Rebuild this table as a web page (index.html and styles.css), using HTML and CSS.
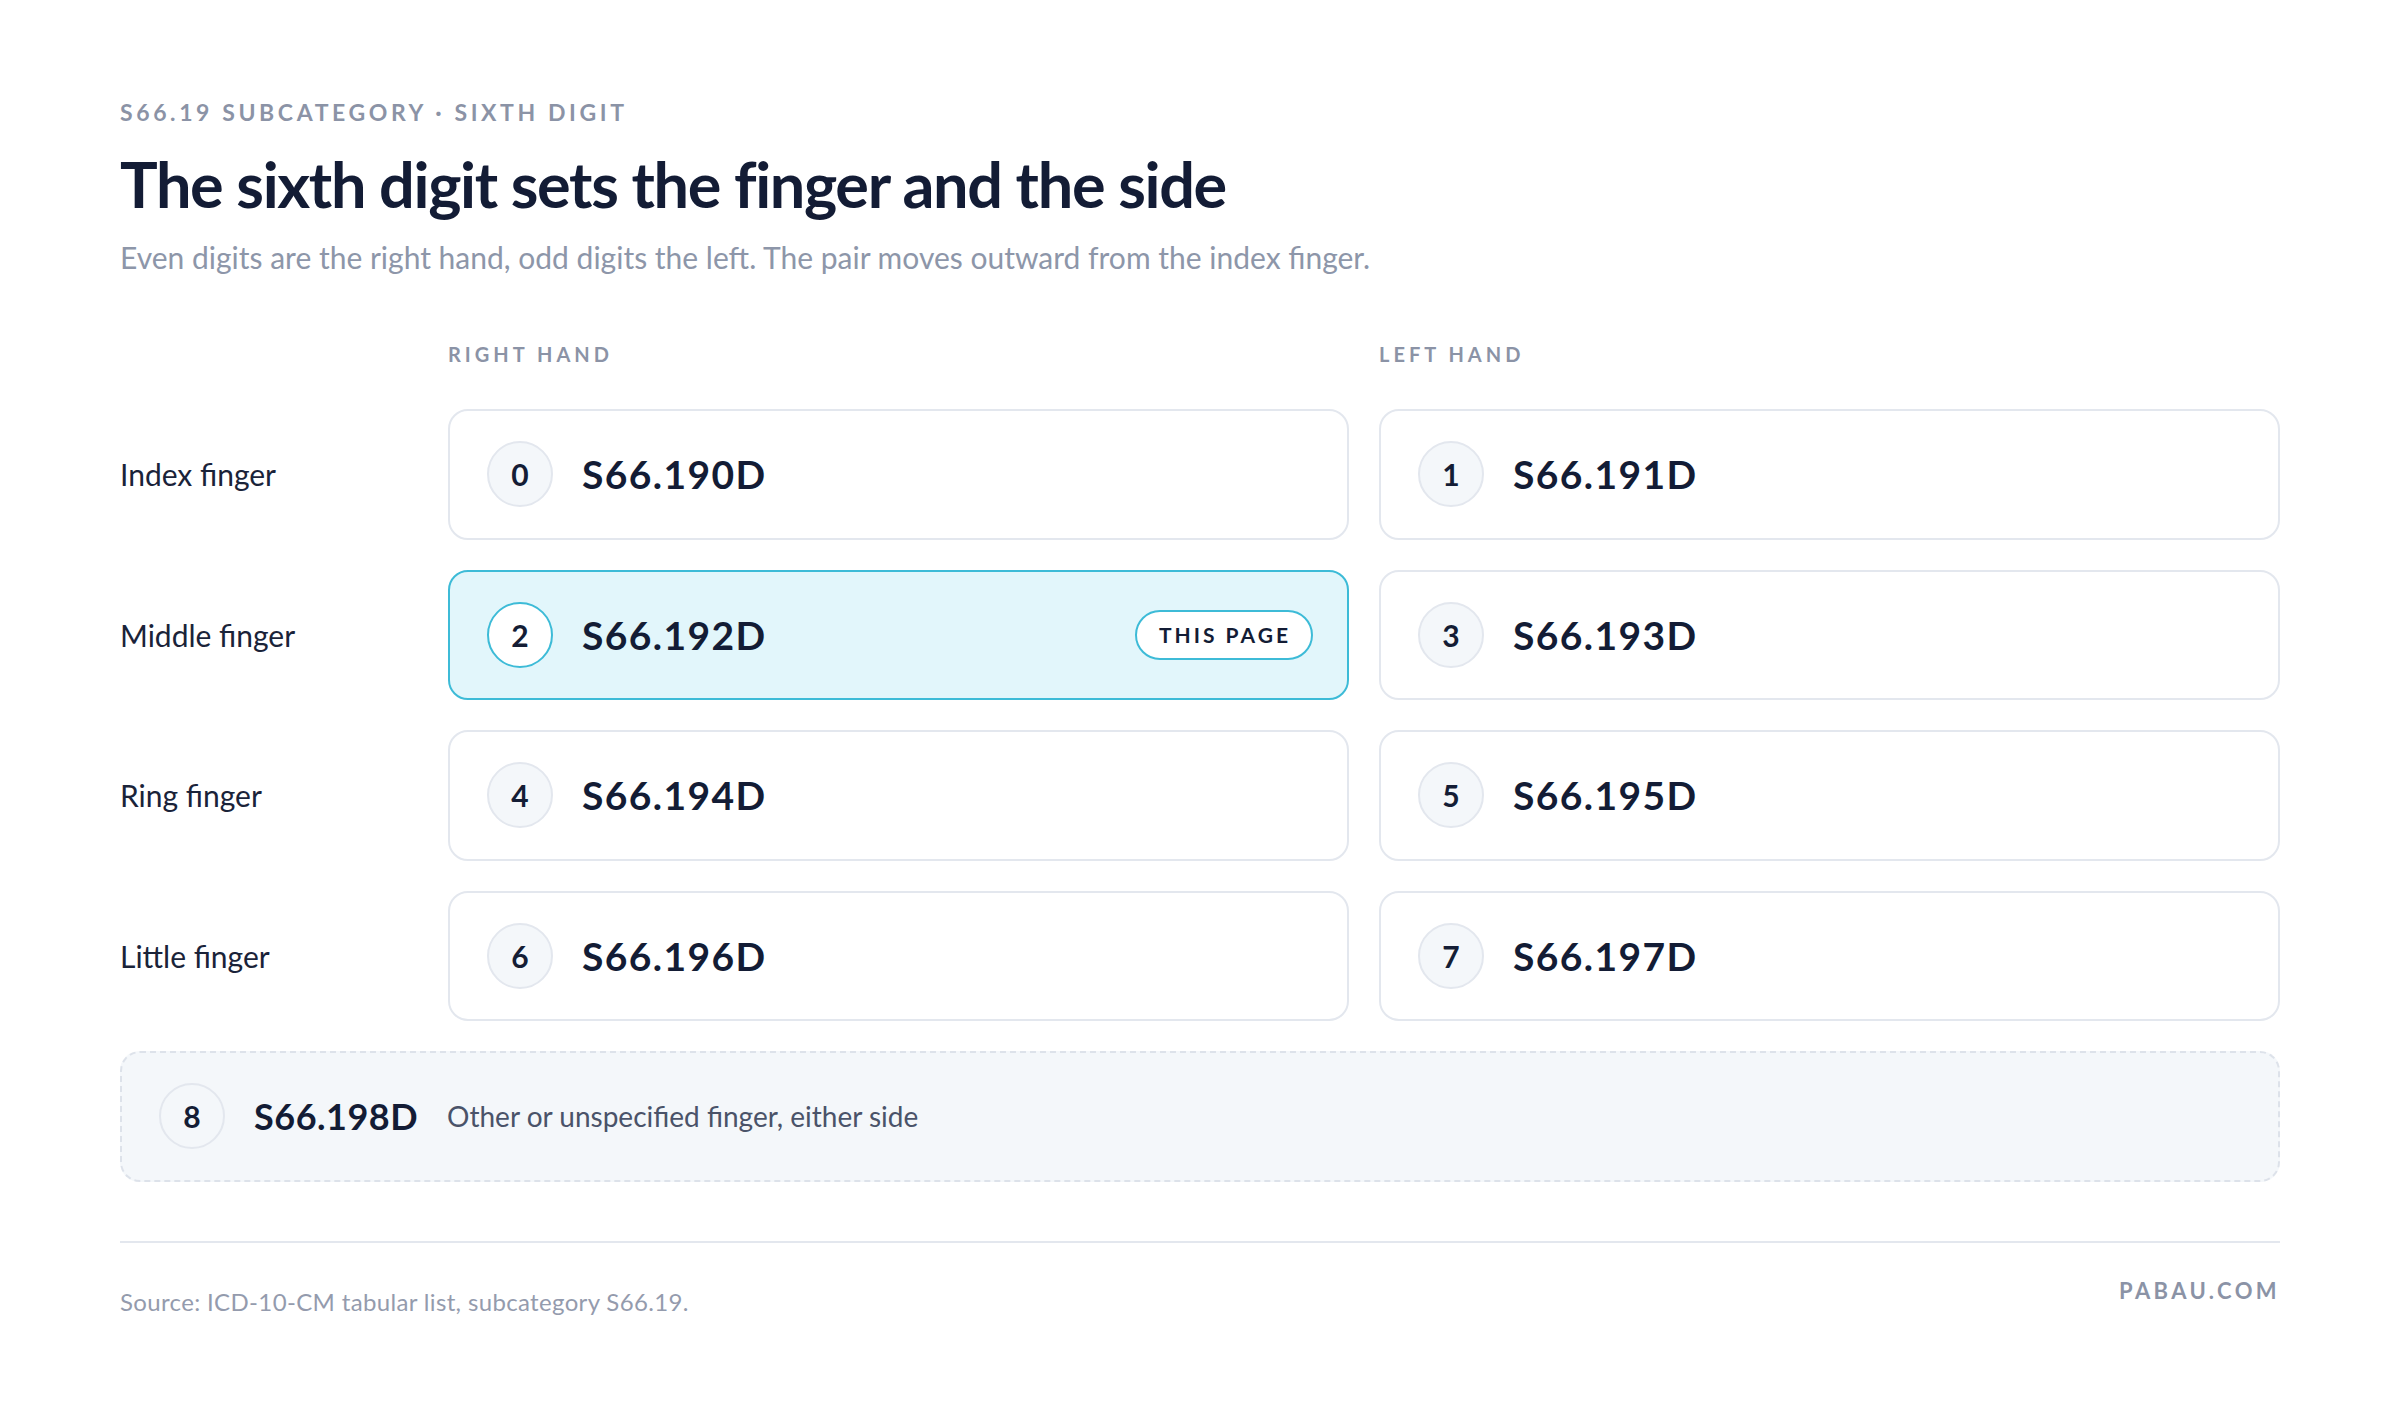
FILE: index.html
```html
<!DOCTYPE html>
<html lang="en">
<head>
<meta charset="utf-8">
<title>The sixth digit sets the finger and the side</title>
<link rel="stylesheet" href="styles.css">
</head>
<body>
<main class="page">
  <header class="intro">
    <p class="eyebrow">S66.19 Subcategory · Sixth digit</p>
    <h1 class="title">The sixth digit sets the finger and the side</h1>
    <p class="lede">Even digits are the right hand, odd digits the left. The pair moves outward from the index finger.</p>
  </header>

  <section class="grid">
    <div class="colhead-spacer"></div>
    <div class="colhead">Right hand</div>
    <div class="colhead">Left hand</div>

    <div class="rowlabel">Index finger</div>
    <div class="card"><span class="digit">0</span><span class="code">S66.190D</span></div>
    <div class="card"><span class="digit">1</span><span class="code">S66.191D</span></div>

    <div class="rowlabel">Middle finger</div>
    <div class="card card-current"><span class="digit">2</span><span class="code">S66.192D</span><span class="pill">This page</span></div>
    <div class="card"><span class="digit">3</span><span class="code">S66.193D</span></div>

    <div class="rowlabel">Ring finger</div>
    <div class="card"><span class="digit">4</span><span class="code">S66.194D</span></div>
    <div class="card"><span class="digit">5</span><span class="code">S66.195D</span></div>

    <div class="rowlabel">Little finger</div>
    <div class="card"><span class="digit">6</span><span class="code">S66.196D</span></div>
    <div class="card"><span class="digit">7</span><span class="code">S66.197D</span></div>
  </section>

  <div class="card card-other"><span class="digit">8</span><span class="code">S66.198D</span><span class="desc">Other or unspecified finger, either side</span></div>

  <footer class="foot">
    <p class="source">Source: ICD-10-CM tabular list, subcategory S66.19.</p>
    <p class="brand">pabau.com</p>
  </footer>
</main>
</body>
</html>
```

FILE: styles.css
```css
* { box-sizing: border-box; }
html, body { margin: 0; padding: 0; background: #ffffff; }
body {
  font-family: "Lato", "Inter", "Noto Sans", sans-serif;
  color: #141d35;
}
p, h1 { margin: 0; }

.page {
  padding: 96px 120px 0 120px;
}

.eyebrow {
  font-size: 23px;
  line-height: 32px;
  font-weight: 700;
  letter-spacing: 3.6px;
  text-transform: uppercase;
  color: #8b93a6;
}

.title {
  margin-top: 18px;
  font-size: 63px;
  line-height: 76px;
  font-weight: 700;
  letter-spacing: -1.35px;
  color: #131c35;
}

.lede {
  margin-top: 15px;
  font-size: 30px;
  line-height: 40px;
  font-weight: 400;
  color: #8d96a9;
}

.grid {
  margin-top: 63px;
  display: grid;
  grid-template-columns: 298px 1fr 1fr;
  column-gap: 30px;
  row-gap: 30px;
}

.colhead {
  font-size: 20px;
  line-height: 28px;
  font-weight: 700;
  letter-spacing: 4px;
  text-transform: uppercase;
  color: #8b93a6;
  margin-bottom: 11px;
}
.colhead-spacer { margin-bottom: 11px; }

.rowlabel {
  display: flex;
  align-items: center;
  font-size: 30px;
  color: #1a2339;
}

.card {
  height: 130.5px;
  display: flex;
  align-items: center;
  padding: 0 34px 0 37px;
  border: 2px solid #e3e7ee;
  border-radius: 20px;
  background: #ffffff;
}

.digit {
  flex: none;
  width: 66px;
  height: 66px;
  border-radius: 50%;
  border: 2px solid #e3e7ee;
  background: #f4f7fa;
  display: flex;
  align-items: center;
  justify-content: center;
  font-size: 30px;
  font-weight: 700;
  color: #141d35;
}

.code {
  margin-left: 29px;
  font-size: 39px;
  font-weight: 700;
  letter-spacing: 1.4px;
  color: #131c35;
}

.card-current {
  background: #e2f6fb;
  border-color: #3dbbd7;
}
.card-current .digit {
  background: #ffffff;
  border-color: #3dbbd7;
}

.pill {
  margin-left: auto;
  height: 50px;
  padding: 0 20px 0 22px;
  display: flex;
  align-items: center;
  border: 2px solid #3dbbd7;
  border-radius: 25px;
  background: #ffffff;
  font-size: 21px;
  font-weight: 700;
  letter-spacing: 3px;
  text-transform: uppercase;
  color: #131c35;
}

.card-other {
  margin-top: 30px;
  background: #f4f7fa;
  border: 2px dashed #dde2ea;
}
.card-other .digit {
  background: #f4f7fa;
}
.card-other .code {
  font-size: 36px;
  letter-spacing: 0.5px;
}
.card-other .desc {
  margin-left: 29px;
  font-size: 28px;
  color: #4a5369;
}

.foot {
  margin-top: 59px;
  border-top: 2px solid #e3e7ee;
  padding-top: 33px;
  display: flex;
  justify-content: space-between;
  align-items: flex-start;
}
.source {
  margin-top: 11px;
  font-size: 24px;
  line-height: 30px;
  letter-spacing: 0.35px;
  color: #949bad;
}
.brand {
  font-size: 22px;
  line-height: 30px;
  font-weight: 700;
  letter-spacing: 3.4px;
  text-transform: uppercase;
  color: #8b93a6;
}
```
